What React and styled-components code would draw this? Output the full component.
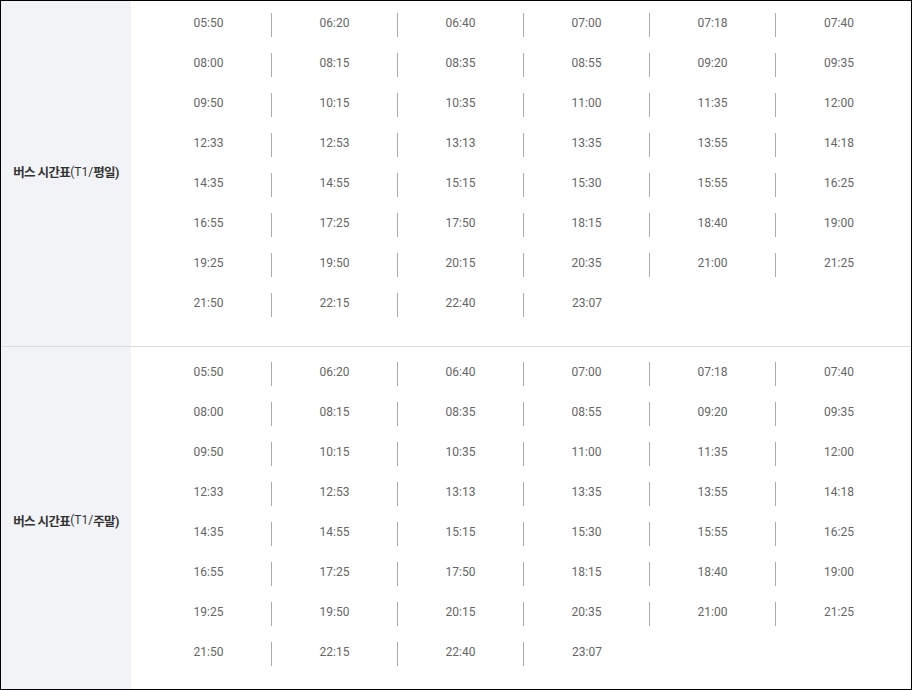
import { createGlobalStyle, styled } from 'styled-components';

const GlobalStyle = createGlobalStyle`
  html, body {
    margin: 0;
    padding: 0;
    background: #fff;
  }
  body {
    font-family: Roboto, "Noto Sans CJK KR", sans-serif;
  }
`;

const weekday = [
  '05:50', '06:20', '06:40', '07:00', '07:18', '07:40',
  '08:00', '08:15', '08:35', '08:55', '09:20', '09:35',
  '09:50', '10:15', '10:35', '11:00', '11:35', '12:00',
  '12:33', '12:53', '13:13', '13:35', '13:55', '14:18',
  '14:35', '14:55', '15:15', '15:30', '15:55', '16:25',
  '16:55', '17:25', '17:50', '18:15', '18:40', '19:00',
  '19:25', '19:50', '20:15', '20:35', '21:00', '21:25',
  '21:50', '22:15', '22:40', '23:07',
];

const schedules = [
  { day: '평일', times: weekday, height: 345, top: 12, shift: -4 },
  { day: '주말', times: weekday, height: 342, top: 15, shift: 4 },
];

const Table = styled.div`
  width: 910px;
  border: 1px solid #000;
  display: flex;
  flex-direction: column;
`;

const Section = styled.section`
  display: flex;
  height: ${(p) => p.$height}px;
  & + & {
    border-top: 1px solid #dcdcdc;
  }
`;

// shift < 0 nudges the label up, > 0 down
const Head = styled.div`
  flex: 0 0 130px;
  background: #f2f3f7;
  display: flex;
  align-items: center;
  justify-content: center;
  padding: ${(p) => (p.$shift > 0 ? `${p.$shift}px 0 0` : `0 0 ${-p.$shift}px`)};
  box-sizing: border-box;
  font-family: Roboto, "Noto Sans CJK KR", sans-serif;
  font-size: 12.5px;
  font-weight: 700;
  color: #333;
  letter-spacing: -0.6px;
`;

const Thin = styled.span`
  font-size: 12px;
  font-weight: 400;
  letter-spacing: 0;
`;

const TimeGrid = styled.ul`
  list-style: none;
  margin: 0;
  padding: ${(p) => p.$top}px 10px 0 15px;
  display: grid;
  grid-template-columns: repeat(6, 126px);
  grid-auto-rows: 24px;
  row-gap: 16px;
  align-content: start;
`;

const Time = styled.li`
  height: 24px;
  line-height: 21px;
  text-align: center;
  font-family: Roboto, sans-serif;
  font-size: 12px;
  color: #666;
  border-right: 1px solid #aaa;
  &:nth-child(6n),
  &:last-child {
    border-right: none;
  }
`;

export default function App() {
  return (
    <>
      <GlobalStyle />
      <Table>
        {schedules.map((s) => (
          <Section key={s.day} $height={s.height}>
            <Head $shift={s.shift}>
              버스 시간표<Thin>(T1/</Thin>{s.day})
            </Head>
            <TimeGrid $top={s.top}>
              {s.times.map((t) => (
                <Time key={t}>{t}</Time>
              ))}
            </TimeGrid>
          </Section>
        ))}
      </Table>
    </>
  );
}
